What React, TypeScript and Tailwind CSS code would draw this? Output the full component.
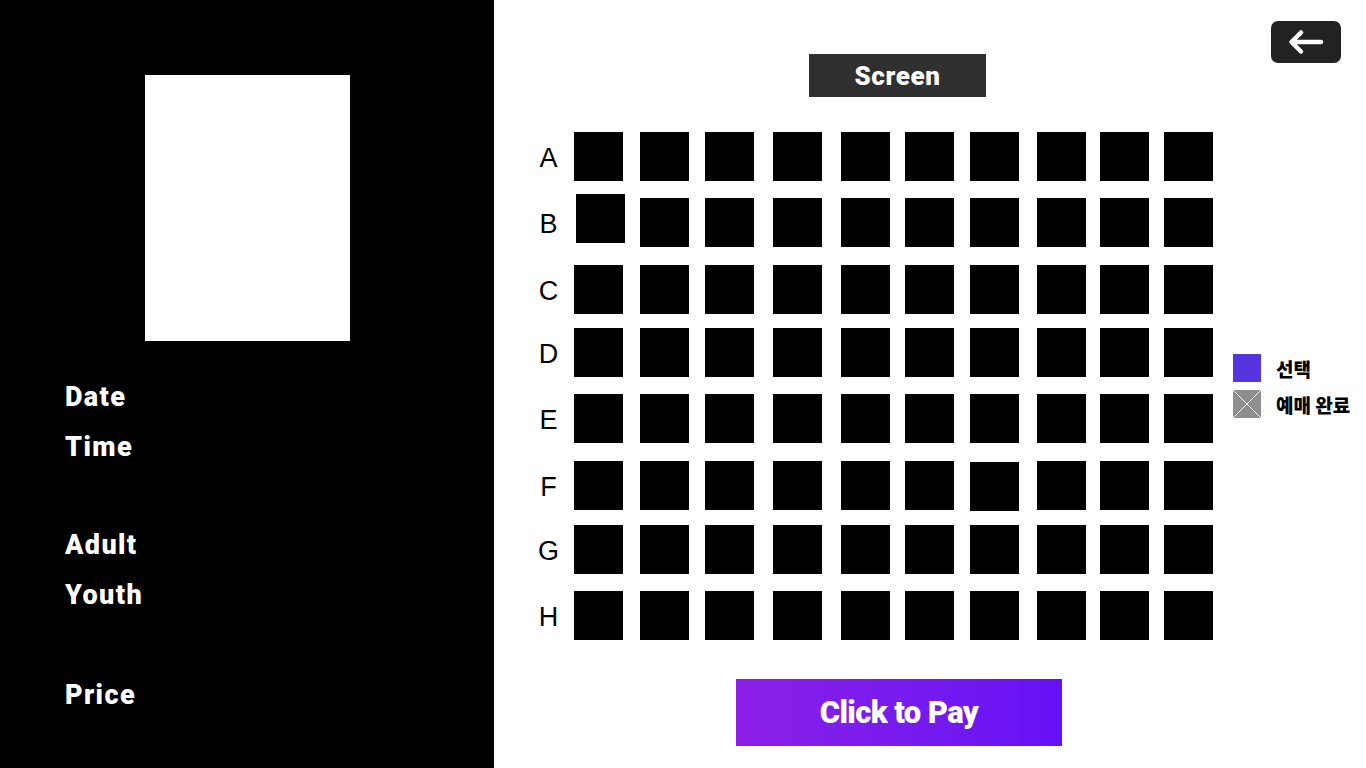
import React from "react";

const rows = ["A", "B", "C", "D", "E", "F", "G", "H"];
const cols = [1, 2, 3, 4, 5, 6, 7, 8, 9, 10];

// a couple of seats are slightly off in the reference
const seatNudge = (row: string, col: number) => {
  if (row === "B" && col === 1) return "translate-x-[2px] -translate-y-[4px]";
  if (row === "F" && col === 7) return "translate-y-[1px]";
  return "";
};

const Seat: React.FC<{ row: string; col: number }> = ({ row, col }) => (
  <button
    aria-label={`${row}${col}`}
    className={`w-[49px] h-[49px] bg-black ${seatNudge(row, col)}`}
  />
);

const InfoLabel: React.FC<{ children: React.ReactNode; className?: string }> = ({ children, className = "" }) => (
  <p className={`text-white text-[27px] font-black leading-[50px] tracking-[1.4px] ${className}`}>{children}</p>
);

const App: React.FC = () => {
  return (
    <div
      className="flex w-[1366px] h-[768px] overflow-hidden bg-white"
      style={{ fontFamily: "Roboto, 'Noto Sans CJK KR', sans-serif" }}
    >
      {/* left: movie info */}
      <aside className="w-[494px] h-full bg-black flex flex-col pl-[65px]">
        <div className="mt-[75px] ml-[80px] w-[205px] h-[266px] bg-white" />
        <div className="mt-[31px]">
          <InfoLabel>Date</InfoLabel>
          <InfoLabel>Time</InfoLabel>
          <InfoLabel className="mt-[48px]">Adult</InfoLabel>
          <InfoLabel>Youth</InfoLabel>
          <InfoLabel className="mt-[50px]">Price</InfoLabel>
        </div>
      </aside>

      {/* right: seat map */}
      <main className="relative flex-1 h-full pl-[44px]">
        <button
          aria-label="back"
          className="absolute top-[21px] right-[25px] w-[70px] h-[42px] rounded-[7px] bg-[#222222] flex items-center justify-center"
        >
          <svg width="38" height="26" viewBox="0 0 38 26" fill="none">
            <path
              d="M34 13H5M14 3.5L4.5 13L14 22.5"
              stroke="white"
              strokeWidth="4.5"
              strokeLinecap="round"
              strokeLinejoin="round"
            />
          </svg>
        </button>

        <div className="mt-[54px] ml-[271px] w-[177px] h-[43px] bg-[#303030] flex items-center justify-center">
          <span className="text-white text-[26px] font-black tracking-[0.6px] leading-none">Screen</span>
        </div>

        <div className="mt-[35px] flex items-center gap-[20px]">
          <div className="flex">
            <div className="w-[36px] grid grid-rows-[66px_67px_63px_66px_67px_64px_66px_49px]">
              {rows.map((r) => (
                <div
                  key={r}
                  className="h-[49px] flex items-center justify-center pr-[18px] pt-[3px] text-[27px] text-black"
                  style={{ fontFamily: "'Liberation Sans', Arial, sans-serif" }}
                >
                  {r}
                </div>
              ))}
            </div>
            <div className="grid grid-cols-[66px_65px_68px_68px_64px_65px_67px_63px_64px_49px] grid-rows-[66px_67px_63px_66px_67px_64px_66px_49px]">
              {rows.map((r) => cols.map((c) => <Seat key={`${r}${c}`} row={r} col={c} />))}
            </div>
          </div>

          <div
            className="flex flex-col gap-[8px] text-[19px] font-black text-black"
            style={{ fontFamily: "'Noto Sans CJK KR', sans-serif" }}
          >
            <div className="flex items-center gap-[15px]">
              <span className="w-[28px] h-[28px] bg-[#5634de]" />
              <span className="leading-none">선택</span>
            </div>
            <div className="flex items-center gap-[15px]">
              <svg width="28" height="28" viewBox="0 0 28 28">
                <rect width="28" height="28" fill="#8f8f8f" />
                <path d="M0 0L28 28M28 0L0 28" stroke="white" strokeWidth="1" />
              </svg>
              <span className="leading-none whitespace-nowrap">예매 완료</span>
            </div>
          </div>
        </div>

        <button className="mt-[39px] ml-[198px] w-[326px] h-[67px] bg-linear-to-r from-[#8b1fe7] to-[#650ff6] flex items-center justify-center">
          <span className="text-white text-[31px] font-black leading-none tracking-[-0.6px]">Click to Pay</span>
        </button>
      </main>
    </div>
  );
};

export default App;
